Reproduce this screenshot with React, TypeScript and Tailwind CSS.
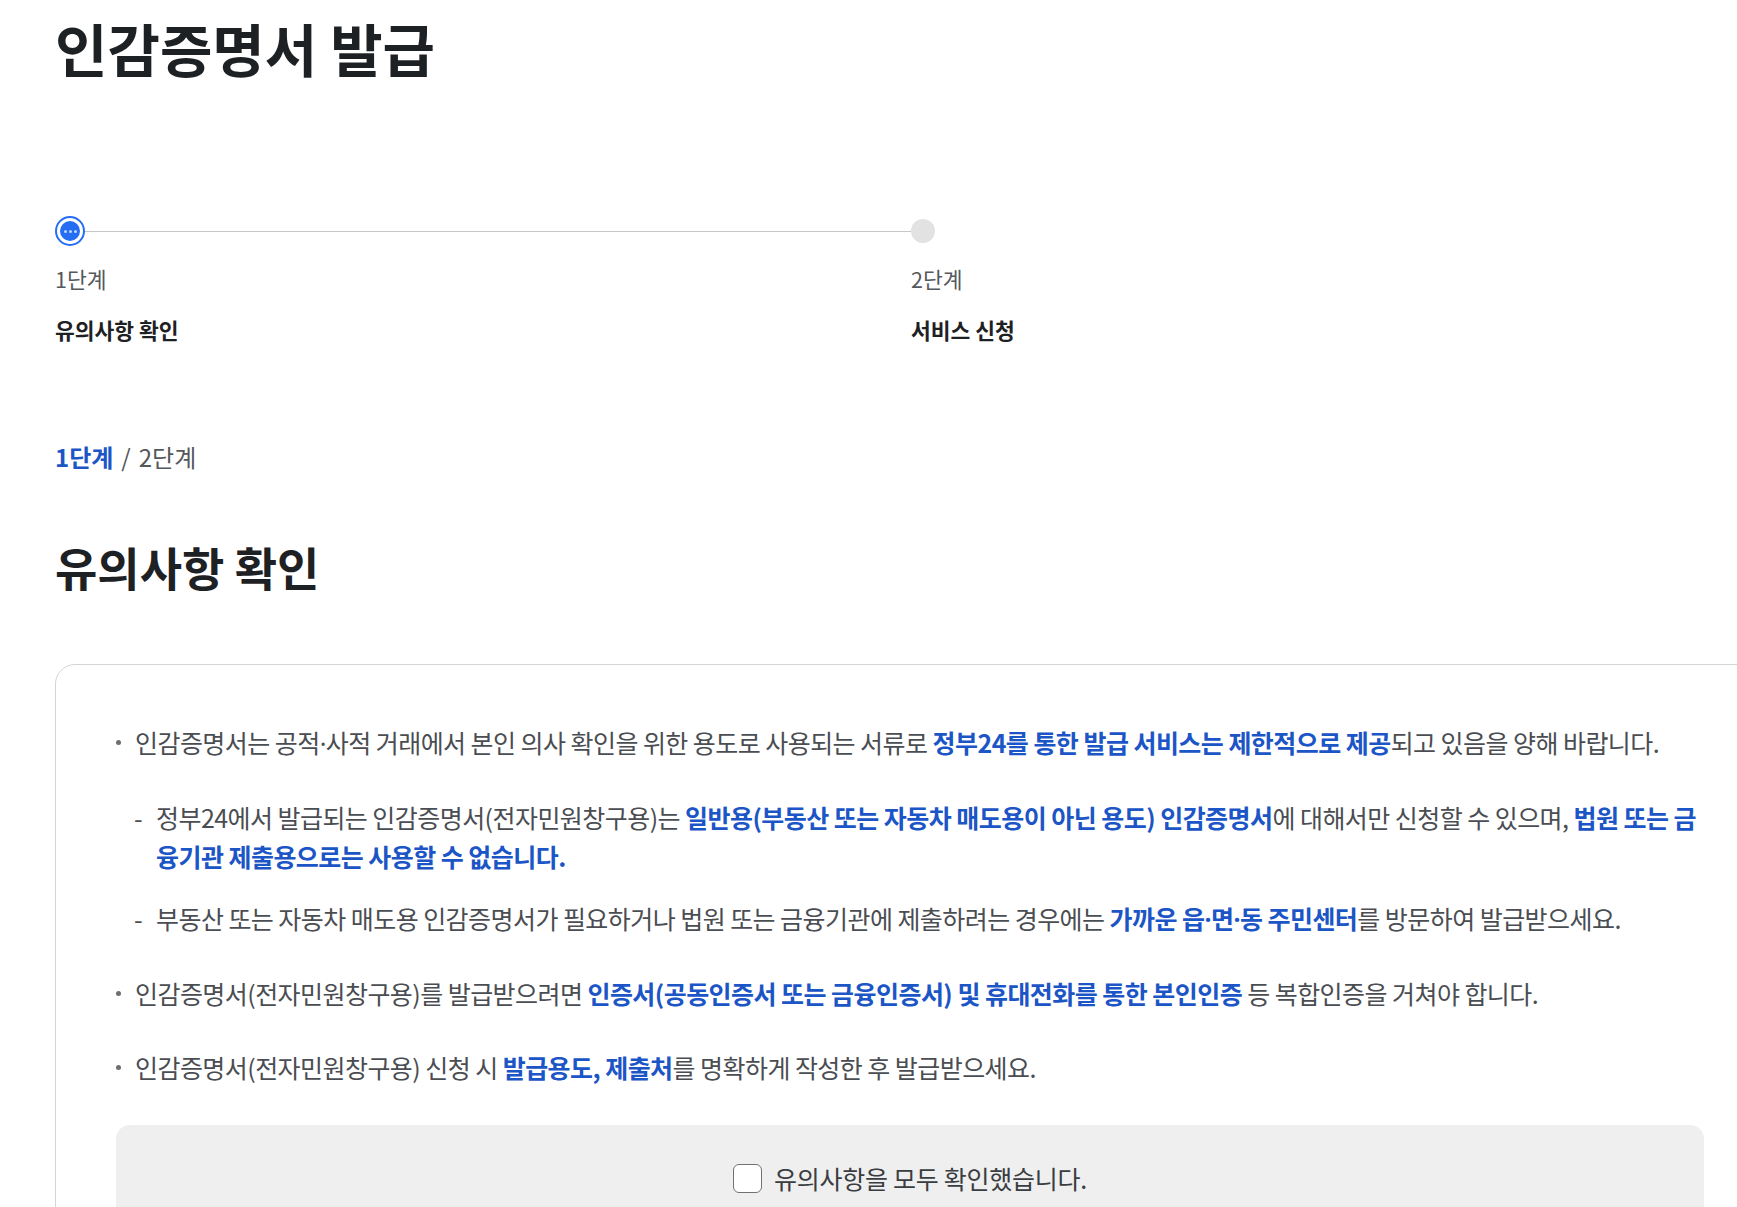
import React from "react"

const font = { fontFamily: '"Noto Sans CJK KR", "Noto Sans", sans-serif' }

function Blue({ children }: { children: React.ReactNode }) {
  return <strong className="font-bold text-[#1b55c6]">{children}</strong>
}

// CJK middle dot is full-width; the reference uses a narrow one
function Dot() {
  return <span className="font-['Noto_Sans']">·</span>
}

function Bullet({ children, sub }: { children: React.ReactNode; sub?: React.ReactNode }) {
  return (
    <li>
      <div className="flex">
        <span className="mr-[14px] mt-[17px] h-[5px] w-[5px] shrink-0 rounded-full bg-[#6b6e72]" />
        <p>{children}</p>
      </div>
      {sub}
    </li>
  )
}

function Dash({ children }: { children: React.ReactNode }) {
  return (
    <li className="flex">
      <span className="ml-[-1px] w-[22px] shrink-0">-</span>
      <p>{children}</p>
    </li>
  )
}

function Stepper() {
  return (
    <div className="grid grid-cols-[856px_856px]">
      <div>
        <div className="flex h-[30px] items-center">
          <div className="flex h-[30px] w-[30px] shrink-0 items-center justify-center rounded-full border-2 border-[#256ef4] bg-white">
            <div className="flex h-[20px] w-[20px] items-center justify-center gap-[2px] rounded-full bg-[#256ef4]">
              <span className="h-[3px] w-[3px] rounded-full bg-white/70" />
              <span className="h-[3px] w-[3px] rounded-full bg-white/70" />
              <span className="h-[3px] w-[3px] rounded-full bg-white/70" />
            </div>
          </div>
          <div className="h-px flex-1 bg-[#c6c6c6]" />
        </div>
        <div className="mt-[18px] text-[21.5px] leading-[30px] text-[#55585c]">1단계</div>
        <div className="mt-[21px] text-[21.5px] font-bold leading-[30px] text-[#1e2124]">유의사항 확인</div>
      </div>
      <div>
        <div className="flex h-[30px] items-center">
          <div className="h-[24px] w-[24px] rounded-full bg-[#e2e2e2]" />
        </div>
        <div className="mt-[18px] text-[21.5px] leading-[30px] text-[#55585c]">2단계</div>
        <div className="mt-[21px] text-[21.5px] font-bold leading-[30px] text-[#1e2124]">서비스 신청</div>
      </div>
    </div>
  )
}

export default function App() {
  return (
    <div className="w-full overflow-hidden bg-white" style={font}>
      <div className="box-content w-[1710px] pb-[40px] pl-[55px] pt-[14px]">
        <h1 className="text-[57px] font-bold leading-[66px] text-[#1e2124]">인감증명서 발급</h1>

        <div className="mt-[136px]">
          <Stepper />
        </div>

        <div className="mt-[96px] flex items-center text-[24px] leading-[32px]">
          <span className="font-bold text-[#1b55c6]">1단계</span>
          <span className="mx-[8px] text-[#55585c]">/</span>
          <span className="text-[#55585c]">2단계</span>
        </div>

        <h2 className="mt-[65px] text-[46px] font-bold leading-[56px] text-[#1e2124]">유의사항 확인</h2>

        <div className="mt-[70px] rounded-[20px] border border-[#d4d4d4] px-[60px] pt-[58px]">
          <ul className="flex flex-col gap-[35px] text-[25px] leading-[39px] tracking-[-0.55px] text-[#4a4d52]">
            <Bullet
              sub={
                <ul className="mt-[35px] flex flex-col gap-[23px] pl-[19px]">
                  <Dash>
                    정부24에서 발급되는 인감증명서(전자민원창구용)는{" "}
                    <Blue>일반용(부동산 또는 자동차 매도용이 아닌 용도) 인감증명서</Blue>에 대해서만 신청할 수
                    있으며, <Blue>법원 또는 금융기관 제출용으로는 사용할 수 없습니다.</Blue>
                  </Dash>
                  <Dash>
                    부동산 또는 자동차 매도용 인감증명서가 필요하거나 법원 또는 금융기관에 제출하려는 경우에는{" "}
                    <Blue>
                      가까운 읍<Dot />면<Dot />동 주민센터
                    </Blue>
                    를 방문하여 발급받으세요.
                  </Dash>
                </ul>
              }
            >
              인감증명서는 공적<Dot />사적 거래에서 본인 의사 확인을 위한 용도로 사용되는 서류로{" "}
              <Blue>정부24를 통한 발급 서비스는 제한적으로 제공</Blue>되고 있음을 양해 바랍니다.
            </Bullet>
            <Bullet>
              인감증명서(전자민원창구용)를 발급받으려면{" "}
              <Blue>인증서(공동인증서 또는 금융인증서) 및 휴대전화를 통한 본인인증</Blue> 등 복합인증을 거쳐야
              합니다.
            </Bullet>
            <Bullet>
              인감증명서(전자민원창구용) 신청 시 <Blue>발급용도, 제출처</Blue>를 명확하게 작성한 후 발급받으세요.
            </Bullet>
          </ul>

          <div className="mt-[38px] flex justify-center rounded-[14px] bg-[#efefef] pb-[60px] pt-[39px]">
            <label className="flex items-center gap-[12px] text-[25px] leading-[29px] tracking-[-0.25px] text-[#3a3d41]">
              <span className="h-[29px] w-[29px] rounded-[6px] border-[1.5px] border-[#6f7377] bg-white" />
              유의사항을 모두 확인했습니다.
            </label>
          </div>
          <div className="h-[60px]" />
        </div>
      </div>
    </div>
  )
}
